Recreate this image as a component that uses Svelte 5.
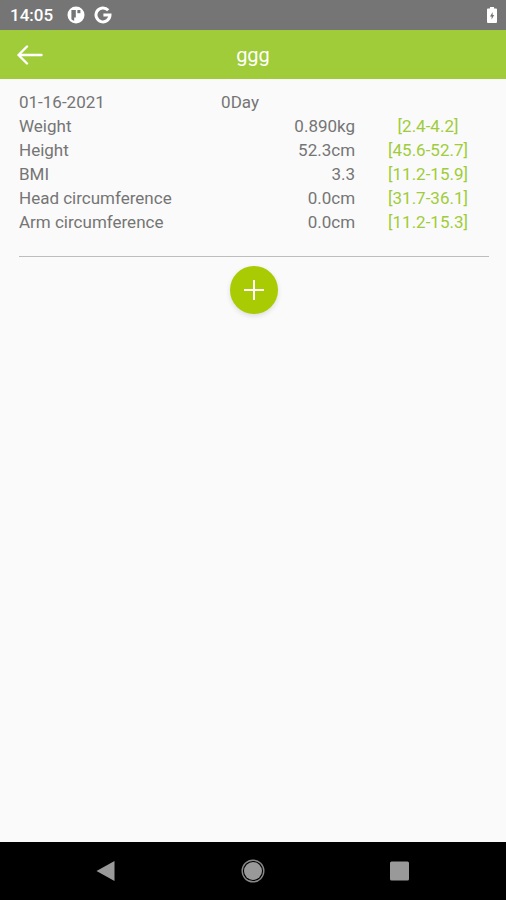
<script>
  const child = 'ggg';

  let records = [
    {
      date: '01-16-2021',
      age: '0Day',
      rows: [
        { label: 'Weight', value: '0.890kg', range: '[2.4-4.2]' },
        { label: 'Height', value: '52.3cm', range: '[45.6-52.7]' },
        { label: 'BMI', value: '3.3', range: '[11.2-15.9]' },
        { label: 'Head circumference', value: '0.0cm', range: '[31.7-36.1]' },
        { label: 'Arm circumference', value: '0.0cm', range: '[11.2-15.3]' }
      ]
    }
  ];
</script>

<div class="screen">
  <div class="status-bar">
    <span class="clock">14:05</span>
    <svg width="18" height="18" viewBox="0 0 18 18" aria-hidden="true">
      <circle cx="9" cy="9" r="8.5" fill="#fff" />
      <path d="M4.4 4h4.4v7.4H7.200v3.400a6.300 6.300 0 0 1-2.800-1.500z" fill="#757575" />
      <path d="M10.400 4h3v3.200h-3z" fill="#757575" />
    </svg>
    <svg width="18" height="18" viewBox="0 0 18 18" aria-hidden="true">
      <path d="M14.2 4.2A7 7 0 1 0 16 9H9.4" fill="none" stroke="#fff" stroke-width="3" />
    </svg>
    <svg class="battery" width="12" height="18" viewBox="0 0 12 18" aria-hidden="true">
      <path d="M4 1h4v1.6h2q1 0 1 1V16q0 1-1 1H2q-1 0-1-1V3.6q0-1 1-1h2z" fill="#fff" />
      <path d="M6.6 6 4 10.400h1.600V13.500L8.200 9H6.600z" fill="#757575" />
    </svg>
  </div>

  <header class="app-bar">
    <button class="back" aria-label="Back">
      <svg width="26" height="20" viewBox="0 0 26 20" aria-hidden="true">
        <path d="M10 1.5 1.500 10l8.500 8.500M1.500 10h23" />
      </svg>
    </button>
    <h1>{child}</h1>
  </header>

  <main>
    {#each records as record}
      <section class="record">
        <div class="record-head">
          <time>{record.date}</time>
          <span>{record.age}</span>
        </div>
        <table>
          <tbody>
            {#each record.rows as row}
              <tr>
                <th scope="row">{row.label}</th>
                <td class="value">{row.value}</td>
                <td class="range">{row.range}</td>
              </tr>
            {/each}
          </tbody>
        </table>
      </section>
    {/each}

    <button class="add" aria-label="Add record">
      <svg width="22" height="22" viewBox="0 0 22 22" aria-hidden="true">
        <path d="M11 1v20M1 11h20" />
      </svg>
    </button>
  </main>

  <nav class="nav-bar">
    <button aria-label="Back">
      <svg width="24" height="24" viewBox="0 0 24 24" aria-hidden="true">
        <path d="M20.5 2v20L2.500 12z" fill="#999" />
      </svg>
    </button>
    <button aria-label="Home">
      <svg width="24" height="24" viewBox="0 0 24 24" aria-hidden="true">
        <circle cx="12" cy="12" r="9" fill="#999" />
        <circle cx="12" cy="12" r="10.8" fill="none" stroke="#888" stroke-width="1.4" />
      </svg>
    </button>
    <button aria-label="Recent apps">
      <svg width="24" height="24" viewBox="0 0 24 24" aria-hidden="true">
        <rect x="2" y="2.500" width="19" height="19" rx="1.500" fill="#999" />
      </svg>
    </button>
  </nav>
</div>

<style>
  :global(body) {
    background: #fafafa;
  }

  .screen {
    min-height: 100vh;
    display: flex;
    flex-direction: column;
    font-family: Roboto, "Liberation Sans", sans-serif;
    color: #757575;
  }

  button {
    display: flex;
    align-items: center;
    justify-content: center;
    padding: 0;
    border: none;
    background: none;
    cursor: pointer;
  }

  .status-bar {
    display: flex;
    align-items: center;
    gap: 9px;
    height: 30px;
    padding: 0 8px 0 10px;
    background: #757575;
    color: #fff;
  }

  .clock {
    margin-right: 5px;
    font-size: 17px;
    font-weight: 500;
    line-height: 24px;
  }

  .battery {
    margin-left: auto;
  }

  .app-bar {
    display: grid;
    grid-template-columns: 60px 1fr 60px;
    align-items: center;
    height: 49px;
    background: #a0cc3a;
    color: #fff;
  }

  .back {
    height: 48px;
  }

  .back path {
    fill: none;
    stroke: #fff;
    stroke-width: 2.4;
    stroke-linecap: round;
    stroke-linejoin: round;
  }

  .app-bar h1 {
    margin: 0;
    font-size: 20px;
    font-weight: 400;
    line-height: 24px;
    text-align: center;
  }

  main {
    flex: 1;
    padding: 11px 17px 24px 19px;
    font-size: 17px;
    line-height: 24px;
  }

  .record {
    padding-bottom: 22px;
    border-bottom: 1px solid #bdbdbd;
  }

  .record-head {
    display: grid;
    grid-template-columns: 43% 1fr;
  }

  table {
    width: 100%;
    border-collapse: collapse;
  }

  th,
  td {
    padding: 0;
    font-weight: 400;
    text-align: left;
  }

  .value {
    text-align: right;
  }

  td.range {
    width: 28.5%;
    padding-left: 12px;
    color: #a0cc3a;
    text-align: center;
  }

  .add {
    width: 48px;
    height: 48px;
    margin: 9px auto 0;
    border-radius: 50%;
    background: #a9cb03;
    box-shadow: 0 2px 5px rgba(0, 0, 0, 0.12);
  }

  .add path {
    stroke: #fff;
    stroke-width: 2;
  }

  .nav-bar {
    display: grid;
    grid-template-columns: repeat(3, 1fr);
    height: 58px;
    padding: 0 33px;
    background: #000;
  }
</style>
